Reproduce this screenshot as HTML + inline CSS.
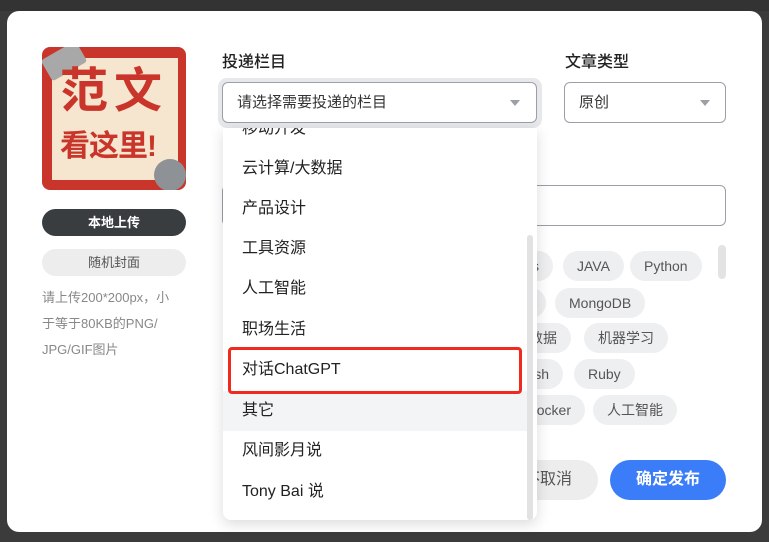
<!DOCTYPE html>
<html><head><meta charset="utf-8"><style>
*{box-sizing:border-box;margin:0;padding:0}
body{width:769px;height:542px;overflow:hidden;background:#3b3b3b;font-family:"Liberation Sans","Noto Sans CJK SC",sans-serif;position:relative}
.abs{position:absolute}
.modal{left:7px;top:11px;width:755px;height:521px;background:#fff;border-radius:12px}
.lbl{font-size:16px;color:#222;font-weight:500}
.sel{border:1px solid #9aa0a6;border-radius:6px;background:#fff;font-size:15px;color:#333;padding-left:14px;line-height:40px}
.tri{width:0;height:0;border-left:5px solid transparent;border-right:5px solid transparent;border-top:6px solid #9aa0a6}
.chip{height:30px;border-radius:15px;background:#eeeff1;color:#555;font-size:14px;line-height:30px;padding:0 14px;white-space:nowrap;text-align:right}
.dd{left:223px;top:128px;width:314px;height:392px;background:#fff;border-radius:0 0 8px 8px;box-shadow:0 4px 14px rgba(0,0,0,.15);overflow:hidden}
.it{position:absolute;left:0;width:304px;height:40px;line-height:40px;padding-left:19px;font-size:16px;color:#222}
</style></head><body>
<div class="abs" style="left:0;top:0;width:769px;height:11px;background:#333"></div>
<div class="abs modal"></div>
<!-- cover -->
<div class="abs" style="left:42px;top:47px;width:144px;height:143px;background:#c9352a;border-radius:8px;overflow:hidden">
 <div class="abs" style="left:10px;top:11px;width:126px;height:122px;background:#f6e6cf"></div>
 <div class="abs" style="left:2px;top:2px;width:40px;height:24px;background:#a8a8a8;transform:rotate(-30deg);border-radius:3px"></div>
 <div class="abs" style="left:18px;top:18px;font-size:48px;font-weight:bold;color:#c9352a;line-height:54px;letter-spacing:6px">范文</div>
 <div class="abs" style="left:18px;top:82px;font-size:30px;font-weight:bold;color:#c9352a;line-height:36px;letter-spacing:-1px">看这里!</div>
 <div class="abs" style="left:112px;top:112px;width:32px;height:32px;border-radius:50%;background:#8e9296"></div>
</div>
<div class="abs" style="left:42px;top:209px;width:144px;height:27px;border-radius:14px;background:#3a3d40;color:#fff;font-size:13px;font-weight:bold;text-align:center;line-height:27px">本地上传</div>
<div class="abs" style="left:42px;top:249px;width:144px;height:27px;border-radius:14px;background:#ededed;color:#555;font-size:13px;text-align:center;line-height:27px">随机封面</div>
<div class="abs" style="left:42px;top:285px;width:150px;font-size:13px;color:#888;line-height:26px;white-space:nowrap">请上传200*200px，小<br>于等于80KB的PNG/<br>JPG/GIF图片</div>
<!-- fields -->
<div class="abs lbl" style="left:222px;top:48px">投递栏目</div>
<div class="abs lbl" style="left:565px;top:48px">文章类型</div>
<div class="abs" style="left:218px;top:78px;width:324px;height:50px;border-radius:9px;background:#e6e8eb"></div>
<div class="abs sel" style="left:222px;top:82px;width:315px;height:41px">请选择需要投递的栏目</div>
<div class="abs tri" style="left:510px;top:100px"></div>
<div class="abs sel" style="left:564px;top:82px;width:162px;height:41px">原创</div>
<div class="abs tri" style="left:700px;top:100px"></div>
<div class="abs" style="left:222px;top:185px;width:504px;height:41px;border:1px solid #9aa0a6;border-radius:6px"></div>
<!-- chips -->
<div class="abs chip" style="left:480px;top:251px;width:73px">Vue.js</div>
<div class="abs chip" style="left:563px;top:251px">JAVA</div>
<div class="abs chip" style="left:630px;top:251px">Python</div>
<div class="abs" style="left:718px;top:245px;width:8px;height:34px;border-radius:4px;background:#e3e3e3"></div>
<div class="abs chip" style="left:490px;top:288px;width:56px"></div>
<div class="abs chip" style="left:555px;top:288px">MongoDB</div>
<div class="abs chip" style="left:480px;top:323px;width:91px">大数据</div>
<div class="abs chip" style="left:584px;top:323px">机器学习</div>
<div class="abs chip" style="left:480px;top:359px;width:83px">Bash</div>
<div class="abs chip" style="left:574px;top:359px">Ruby</div>
<div class="abs chip" style="left:480px;top:395px;width:105px">Docker</div>
<div class="abs chip" style="left:593px;top:395px">人工智能</div>
<div class="abs" style="left:480px;top:460px;width:118px;height:40px;border-radius:20px;background:#ededed;color:#555;font-size:16px;line-height:40px;text-align:right;padding-right:26px">暂不取消</div>
<div class="abs" style="left:610px;top:460px;width:116px;height:40px;border-radius:20px;background:#3b7cf8;color:#fff;font-size:16px;font-weight:bold;line-height:40px;text-align:center">确定发布</div>
<!-- dropdown -->
<div class="abs dd">
 <div class="it" style="top:-19px">移动开发</div>
 <div class="it" style="top:21px">云计算/大数据</div>
 <div class="it" style="top:61px">产品设计</div>
 <div class="it" style="top:101px">工具资源</div>
 <div class="it" style="top:141px">人工智能</div>
 <div class="it" style="top:182px">职场生活</div>
 <div class="it" style="top:222px">对话ChatGPT</div>
 <div class="it" style="top:263px;background:#f3f4f6">其它</div>
 <div class="it" style="top:303px">风间影月说</div>
 <div class="it" style="top:344px">Tony Bai 说</div>
 <div class="abs" style="left:304px;top:107px;width:6px;height:285px;border-radius:3px;background:#e2e2e2"></div>
</div>
<div class="abs" style="left:228px;top:347px;width:294px;height:47px;border:3px solid #f02a1e;border-radius:4px"></div>
</body></html>
